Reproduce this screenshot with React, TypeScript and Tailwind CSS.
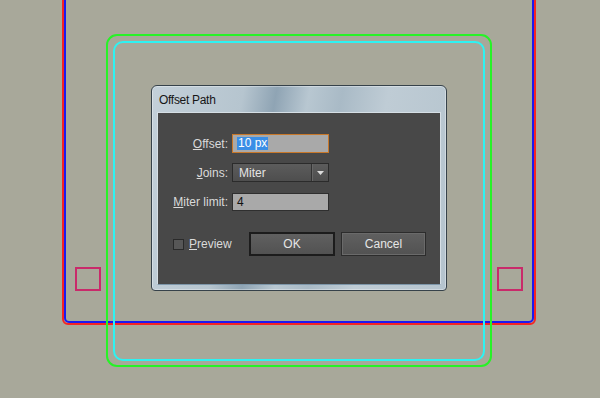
export default function App() {
  return (
    <div className="relative h-[398px] w-[600px] overflow-hidden bg-[#a8a89a] font-['Liberation_Sans',Arial,sans-serif]">
      {/* path outlines on the artboard */}
      <div className="absolute left-[62px] top-[-20px] h-[345px] w-[474px] rounded-[6px] border-2 border-[#f52424]" />
      <div className="absolute left-[64px] top-[-20px] h-[343px] w-[470px] rounded-[5px] border-2 border-[#1a1af0]" />
      <div className="absolute left-[106px] top-[34px] h-[333px] w-[386px] rounded-[11px] border-2 border-[#27f227]" />
      <div className="absolute left-[113px] top-[41px] h-[320px] w-[372px] rounded-[10px] border-2 border-[#2ef2f2]" />

      {/* anchor squares */}
      <div className="absolute left-[75px] top-[267px] h-[24px] w-[26px] border-[2.5px] border-[#c92a6a]" />
      <div className="absolute left-[497px] top-[267px] h-[24px] w-[26px] border-[2.5px] border-[#c92a6a]" />

      {/* Offset Path dialog */}
      <div className="absolute left-[151px] top-[85px] flex h-[206px] w-[296px] flex-col rounded-t-[6px] rounded-b-[4px] border border-[#36424a] bg-[linear-gradient(100deg,#c3d0d9_0%,#b6c5cf_28%,#8fa4b4_38%,#b8c7d1_48%,#a9bac6_58%,#bfccd5_72%,#b5c4ce_100%)] px-[5px] pb-[5px] shadow-[inset_0_0_0_1px_rgba(255,255,255,0.35)]">
        <div className="flex h-[26px] items-center pl-[2px] pt-[1px] text-[12px] tracking-[-0.3px] text-[#161616]">
          Offset Path
        </div>

        <div className="flex flex-1 flex-col border border-[#d6dfe5] border-b-[#7e97aa] bg-[#484848] pt-[21px] text-[12px] text-[#dadada]">
          {/* Offset */}
          <div className="flex items-center">
            <label className="w-[70px] text-right">
              <span className="underline">O</span>ffset:
            </label>
            <div className="ml-[4px] flex h-[19px] w-[97px] items-center border border-[#c8782a] bg-[#a9a9a9] pl-[4px]">
              <span className="bg-[#3a8ee6] px-[1px] leading-[13px] text-white">10 px</span>
            </div>
          </div>

          {/* Joins */}
          <div className="mt-[10px] flex items-center">
            <label className="w-[70px] text-right">
              <span className="underline">J</span>oins:
            </label>
            <div className="ml-[4px] flex h-[19px] w-[97px] items-center border border-[#2b2b2b] bg-[linear-gradient(#5c5c5c,#4e4e4e)]">
              <span className="flex-1 pl-[6px] text-[#e4e4e4]">Miter</span>
              <div className="flex h-full w-[17px] items-center justify-center border-l border-[#333] shadow-[inset_1px_0_0_#666]">
                <svg width="7" height="4" viewBox="0 0 7 4">
                  <path d="M0 0h7L3.5 4z" fill="#dcdcdc" />
                </svg>
              </div>
            </div>
          </div>

          {/* Miter limit */}
          <div className="mt-[11px] flex items-center">
            <label className="w-[70px] text-right">
              <span className="underline">M</span>iter limit:
            </label>
            <div className="ml-[4px] flex h-[18px] w-[97px] items-center border border-[#2f2f2f] bg-[#a9a9a9] pl-[4px] text-[#111]">
              4
            </div>
          </div>

          {/* Preview + buttons */}
          <div className="mt-[21px] flex items-center pl-[15px]">
            <div className="flex w-[76px] items-center">
              <span className="h-[11px] w-[11px] border border-[#2a2a2a] bg-[#575757]" />
              <span className="ml-[5px]">
                <span className="underline">P</span>review
              </span>
            </div>
            <button className="flex h-[24px] w-[86px] items-center justify-center border-2 border-[#1c1c1c] bg-[linear-gradient(#606060,#525252)] text-[#e6e6e6]">
              OK
            </button>
            <button className="ml-[6px] flex h-[24px] w-[85px] items-center justify-center border border-[#2c2c2c] bg-[linear-gradient(#606060,#525252)] text-[#e6e6e6] shadow-[inset_0_0_0_1px_#6a6a6a]">
              Cancel
            </button>
          </div>
        </div>
      </div>
    </div>
  )
}
